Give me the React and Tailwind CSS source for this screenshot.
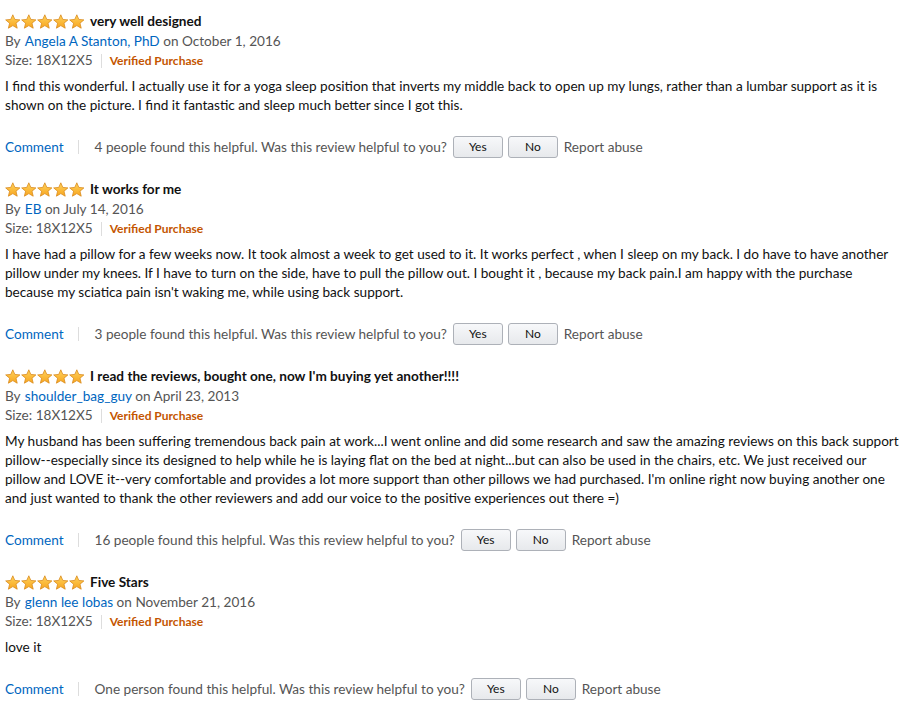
import React from "react";

function Star({ x }) {
  return (
    <path
      transform={`translate(${x},0)`}
      d="M7.8 0.8 L9.8 5.4 L14.9 5.9 L11 9.2 L12.2 14.2 L7.8 11.6 L3.4 14.2 L4.6 9.2 L0.7 5.9 L5.8 5.4 Z"
      fill="url(#sg)"
      stroke="#d98a1c"
      strokeWidth="0.8"
      strokeLinejoin="round"
    />
  );
}

function Stars() {
  return (
    <svg width="80" height="15" viewBox="0 0 80 15" className="shrink-0">
      <defs>
        <linearGradient id="sg" x1="0" y1="0" x2="0" y2="1">
          <stop offset="0" stopColor="#ffd35c" />
          <stop offset="1" stopColor="#f7a51f" />
        </linearGradient>
      </defs>
      {[0, 16, 32, 48, 64].map((x) => (
        <Star key={x} x={x} />
      ))}
    </svg>
  );
}

function Btn({ children }) {
  return (
    <button className="w-[50px] h-[22px] rounded-[3px] border border-[#adb1b8] bg-gradient-to-b from-[#f7f8fa] to-[#e7e9ec] text-[12px] text-[#111] leading-none">
      {children}
    </button>
  );
}

function Review({ title, author, date, body, helpful }) {
  return (
    <div className="pb-[21px]">
      <div className="flex items-center h-[19px] gap-[5px]">
        <Stars />
        <span className="font-bold text-[#111]">{title}</span>
      </div>
      <div className="h-[19px] mt-[1px] text-[#555]">
        By <a className="text-[#0066c0] ml-[1px]">{author}</a> on {date}
      </div>
      <div className="h-[19px] flex items-center text-[#555]">
        <span>Size: 18X12X5</span>
        <span className="mx-[8px] w-px h-[14px] bg-[#ddd]" />
        <span className="text-[#c45500] font-bold text-[12px]">Verified Purchase</span>
      </div>
      <div className="mt-[7px] text-[#111]">{body}</div>
      <div className="mt-[20px] flex items-center h-[24px] text-[#555]">
        <a className="text-[#0066c0]">Comment</a>
        <span className="ml-[14px] w-px h-[14px] bg-[#ddd]" />
        <span className="ml-[16px]">{helpful} Was this review helpful to you?</span>
        <span className="ml-[6px] flex gap-[5px]">
          <Btn>Yes</Btn>
          <Btn>No</Btn>
        </span>
        <span className="ml-[6px]">Report abuse</span>
      </div>
    </div>
  );
}

export default function App() {
  return (
    <div
      className="bg-white w-[913px] min-h-[720px] pl-[5px] pr-[10px] pt-[12px] text-[13.6px] leading-[19px]"
      style={{ fontFamily: "Lato, 'Liberation Sans', sans-serif" }}
    >
      <Review
        title="very well designed"
        author="Angela A Stanton, PhD"
        date="October 1, 2016"
        body={
          <>
            I find this wonderful. I actually use it for a yoga sleep position that inverts my middle back to open up my lungs, rather than a lumbar support as it is
            <br />
            shown on the picture. I find it fantastic and sleep much better since I got this.
          </>
        }
        helpful="4 people found this helpful."
      />
      <Review
        title="It works for me"
        author="EB"
        date="July 14, 2016"
        body={
          <>
            I have had a pillow for a few weeks now. It took almost a week to get used to it. It works perfect , when I sleep on my back. I do have to have another
            <br />
            pillow under my knees. If I have to turn on the side, have to pull the pillow out. I bought it , because my back pain.I am happy with the purchase
            <br />
            because my sciatica pain isn't waking me, while using back support.
          </>
        }
        helpful="3 people found this helpful."
      />
      <Review
        title="I read the reviews, bought one, now I'm buying yet another!!!!"
        author="shoulder_bag_guy"
        date="April 23, 2013"
        body={
          <>
            My husband has been suffering tremendous back pain at work...I went online and did some research and saw the amazing reviews on this back support
            <br />
            pillow--especially since its designed to help while he is laying flat on the bed at night...but can also be used in the chairs, etc. We just received our
            <br />
            pillow and LOVE it--very comfortable and provides a lot more support than other pillows we had purchased. I'm online right now buying another one
            <br />
            and just wanted to thank the other reviewers and add our voice to the positive experiences out there =)
          </>
        }
        helpful="16 people found this helpful."
      />
      <Review
        title="Five Stars"
        author="glenn lee lobas"
        date="November 21, 2016"
        body="love it"
        helpful="One person found this helpful."
      />
    </div>
  );
}
